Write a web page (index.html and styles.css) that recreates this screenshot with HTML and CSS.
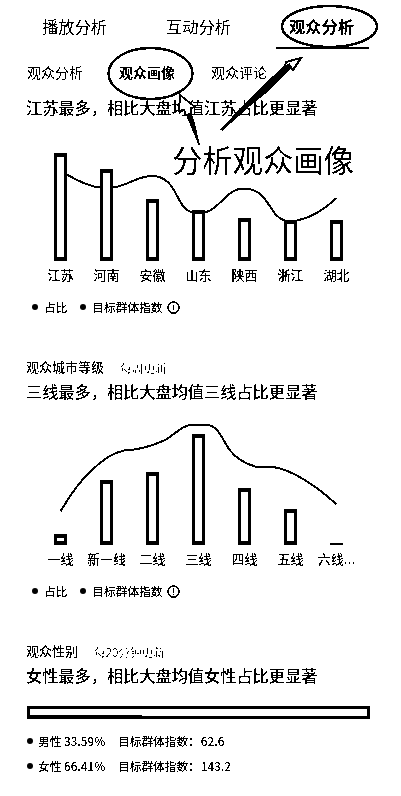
FILE: index.html
```html
<!DOCTYPE html>
<html lang="zh-CN">
<head>
<meta charset="utf-8">
<title>观众画像</title>
<link rel="stylesheet" href="styles.css">
</head>
<body>
<svg class="defs" width="0" height="0" aria-hidden="true">
  <filter id="ink" x="0" y="0" width="100%" height="100%"><feComponentTransfer><feFuncA type="discrete" tableValues="0 1"/></feComponentTransfer></filter>
</svg>
<main class="page">
  <nav class="tabs"><span>播放分析</span><span>互动分析</span><span class="active">观众分析</span></nav>
  <nav class="subtabs"><span>观众分析</span><span class="current">观众画像</span><span>观众评论</span></nav>

  <section class="region">
    <h2>江苏最多，相比大盘均值江苏占比更显著</h2>
    <div class="chart chart-region">
      <div class="bars"><i class="b1"></i><i class="b2"></i><i class="b3"></i><i class="b4"></i><i class="b5"></i><i class="b6"></i><i class="b7"></i></div>
      <svg class="curve" viewBox="0 0 401 141" width="401" height="141"><path d="M66 54C78 61 90 67 101 67.5M113 67.5C130 65 137 56 152 56C178 56 176 90 192 92H206C220 89 226 68.500 244 68.500C269 68.500 269 97 285 100.500H297C310 98 325 89 336.500 78"/></svg>
    </div>
    <div class="labels"><span>江苏</span><span>河南</span><span>安徽</span><span>山东</span><span>陕西</span><span>浙江</span><span>湖北</span></div>
    <div class="legend"><b class="dot"></b><span>占比</span><b class="dot second"></b><span>目标群体指数</span><svg class="info" viewBox="0 0 13 13"><circle cx="6.500" cy="6.500" r="5.500"/><path d="M6.500 3.500V9.500"/></svg></div>
  </section>

  <section class="city">
    <div class="caption"><h3>观众城市等级</h3><small>每周更新</small></div>
    <h2>三线最多，相比大盘均值三线占比更显著</h2>
    <div class="chart chart-city">
      <div class="bars"><i class="c1"></i><i class="c2"></i><i class="c3"></i><i class="c4"></i><i class="c5"></i><i class="c6"></i><i class="c7"></i></div>
      <svg class="curve" viewBox="0 0 401 141" width="401" height="141"><path d="M60.500 107.500C70 91 79 78 91 67C101 57 111 49 124 46.500C138 46 152 42 164 36.500C175 31 182 20.500 194 20.500H204C219 20.500 221 34 230 46.500C237 55 245 60 257 63C264 64 266 63 273 63C291 65 318 83 336.500 100.500"/></svg>
    </div>
    <div class="labels"><span>一线</span><span>新一线</span><span>二线</span><span>三线</span><span>四线</span><span>五线</span><span>六线...</span></div>
    <div class="legend"><b class="dot"></b><span>占比</span><b class="dot second"></b><span>目标群体指数</span><svg class="info" viewBox="0 0 13 13"><circle cx="6.500" cy="6.500" r="5.500"/><path d="M6.500 3V8M6.500 9V10"/></svg></div>
  </section>

  <section class="gender">
    <div class="caption"><h3>观众性别</h3><small>每20分钟更新</small></div>
    <h2>女性最多，相比大盘均值女性占比更显著</h2>
    <div class="ratio"><i></i></div>
    <div class="stat"><b class="dot"></b><span class="share">男性 33.59%</span><span>目标群体指数：</span><span class="value">62.6</span></div>
    <div class="stat"><b class="dot"></b><span class="share">女性 66.41%</span><span>目标群体指数：</span><span class="value">143.2</span></div>
  </section>

  <svg class="marks" viewBox="0 0 401 160" width="401" height="160">
    <ellipse cx="329.500" cy="26.500" rx="47.500" ry="20.500"/>
    <ellipse cx="150.500" cy="73.500" rx="42" ry="25.500"/>
    <path class="head" d="M286 62L301 58L293 70L290 66L284 71Z"/>
    <path class="solid" d="M220.500 129.500L243 105L262 86L284 66L290 63L291 68L270 90L250 106L222 131Z"/>
    <path class="head" d="M180 95L195 107L191 108L191 114L186 115L184 110L179 111Z"/>
    <path class="solid" d="M200 145L198.500 145L186 115L191 112L194 120Z"/>
  </svg>
  <p class="note">分析观众画像</p>
</main>
</body>
</html>
```
FILE: styles.css
```css
* { box-sizing: border-box; }
body { margin: 0; background: #fff; color: #000; font-family: "Noto Sans CJK SC", "Noto Sans", sans-serif; }
.defs { position: absolute; }
.page { position: relative; width: 401px; height: 796px; overflow: hidden; background: #fff; }
.tabs, .subtabs, h2, .labels, .legend span, .caption, .stat span, .note, .info { filter: url(#ink); }
.tabs { display: flex; height: 49px; padding: 6px 32px 0 42px; justify-content: space-between; font-size: 16.3px; line-height: 40px; }
.tabs span { height: 43px; }
.tabs .active { width: 93px; padding-left: 13px; font-weight: 700; border-bottom: 2px solid #000; margin-left: -14px; white-space: nowrap; }
.subtabs { display: flex; gap: 36px; height: 46px; padding-left: 27px; font-size: 14px; line-height: 47px; }
.subtabs .current { font-weight: 700; }
h2 { margin: 0; height: 24px; padding-left: 26px; font-size: 16.2px; font-weight: 500; line-height: 24px; white-space: nowrap; }
.chart { display: grid; height: 141px; }
.chart-region { margin-top: 1px; }
.chart > * { grid-area: 1 / 1; }
.curve { display: block; fill: none; stroke: #000; stroke-width: 2; shape-rendering: crispEdges; }
.bars { display: flex; justify-content: space-between; align-items: flex-end; width: 289px; height: 141px; margin-left: 54px; }
.bars i { width: 13px; border: solid #000; border-width: 4px 3px; background: #fff; }
.b1 { height: 108px; } .b2 { height: 92px; } .b3 { height: 62px; } .b4 { height: 51px; }
.b5 { height: 43px; } .b6 { height: 41px; } .b7 { height: 41px; }
.c1 { height: 11px; } .c2 { height: 65px; } .c3 { height: 73px; } .c4 { height: 111px; }
.c5 { height: 57px; } .c6 { height: 36px; } .bars .c7 { height: 2px; border-width: 2px 0 0; }
.labels { display: grid; grid-template-columns: repeat(7, 46px); height: 30px; padding-left: 37.500px; font-size: 13px; font-weight: 500; line-height: 28px; text-align: center; white-space: nowrap; }
.legend { display: flex; align-items: center; height: 32px; padding-left: 32px; font-size: 11.700px; line-height: 20px; font-weight: 500; }
.dot { width: 6px; height: 6px; border-radius: 50%; background: #000; margin-right: 6px; }
.dot.second { margin-left: 13px; }
.info { width: 13px; height: 13px; margin-left: 4px; fill: none; stroke: #000; stroke-width: 1.6; }
.city { padding-top: 32px; }
.caption { display: flex; align-items: center; gap: 16px; height: 24px; padding-left: 26px; }
h3 { margin: 0; font-size: 13px; font-weight: 500; line-height: 24px; }
small { font-size: 11.700px; font-weight: 300; line-height: 24px; padding-top: 2px; }
.city h2, .gender h2 { height: 25px; }
.gender { padding-top: 32px; }
.ratio { width: 343px; height: 13px; margin: 18px 0 9px 27px; border: 3px solid #000; }
.ratio i { display: block; width: 112px; height: 7px; border-bottom: 1px solid #000; }
.stat { display: flex; align-items: center; height: 25px; padding-left: 27px; font-size: 11.700px; font-weight: 500; }
.stat .dot { margin-right: 5px; }
.share { width: 80px; }
.value { margin-left: 1px; }
.marks { position: absolute; left: 0; top: 0; fill: none; stroke: #000; stroke-width: 2.500; shape-rendering: crispEdges; }
.marks .solid { fill: #000; stroke: none; }
.marks .head { fill: #fff; stroke-width: 2; }
.note { position: absolute; left: 172px; top: 137px; margin: 0; font-size: 30.300px; line-height: 44px; white-space: nowrap; }
```
